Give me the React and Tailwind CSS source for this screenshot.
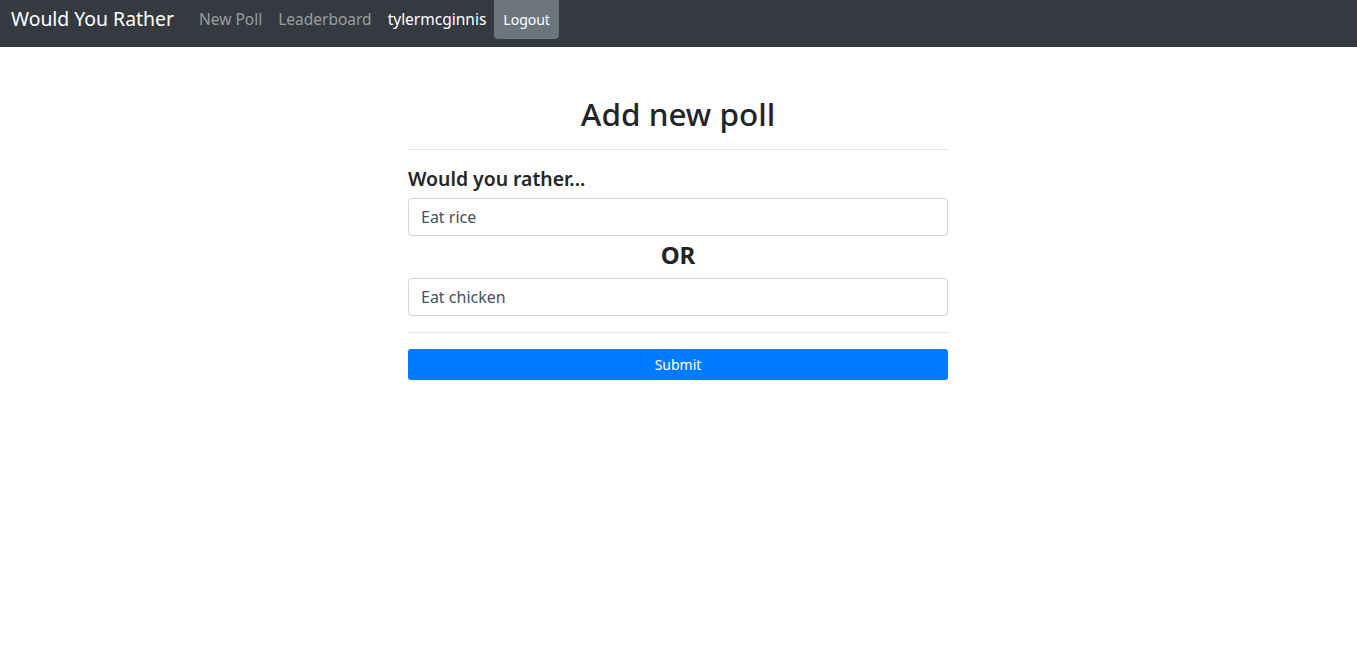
import { useState } from 'react'

export default function App() {
  const [optionOne, setOptionOne] = useState('Eat rice')
  const [optionTwo, setOptionTwo] = useState('Eat chicken')

  return (
    <div className="min-h-screen bg-white font-['Noto_Sans',sans-serif] text-[#212529]">
      {/* Navbar */}
      <nav className="flex h-[47px] items-start bg-[#343a40] pl-[11px]">
        <span className="mt-[7px] mr-[17px] text-[19.4px] leading-[24px] text-white">Would You Rather</span>
        <div className="flex items-start">
          <a className="mt-[9px] px-[8px] text-[15.5px] leading-[20px] text-white/50">New Poll</a>
          <a className="mt-[9px] px-[8px] text-[15.5px] leading-[20px] text-white/50">Leaderboard</a>
          <span className="mt-[9px] px-[8px] text-[15.5px] leading-[20px] text-white">tylermcginnis</span>
          <button className="h-[39px] rounded-b-[4px] bg-[#6c757d] px-[9px] text-[14px] text-white">
            Logout
          </button>
        </div>
      </nav>

      {/* Form */}
      <div className="flex justify-center pr-[1px]">
        <div className="w-[540px]">
          <h2 className="mt-[48px] text-center text-[31.5px] leading-[38px] font-medium">Add new poll</h2>
          <hr className="mt-[16px] border-t border-black/10" />
          <div className="mt-[17px] text-[19.4px] leading-[24px] font-semibold">Would you rather...</div>
          <input
            value={optionOne}
            onChange={(e) => setOptionOne(e.target.value)}
            className="mt-[7px] block h-[38px] w-full rounded-[4px] border border-[#ced4da] px-[12px] text-[16px] text-[#495057] outline-none"
          />
          <div className="text-center text-[24px] leading-[38px] font-bold">OR</div>
          <input
            value={optionTwo}
            onChange={(e) => setOptionTwo(e.target.value)}
            className="mt-[4px] block h-[38px] w-full rounded-[4px] border border-[#ced4da] px-[12px] text-[16px] text-[#495057] outline-none"
          />
          <hr className="mt-[16px] border-t border-black/10" />
          <button className="mt-[16px] block h-[31px] w-full rounded-[3px] bg-[#007bff] text-[14px] text-white">
            Submit
          </button>
        </div>
      </div>
    </div>
  )
}
